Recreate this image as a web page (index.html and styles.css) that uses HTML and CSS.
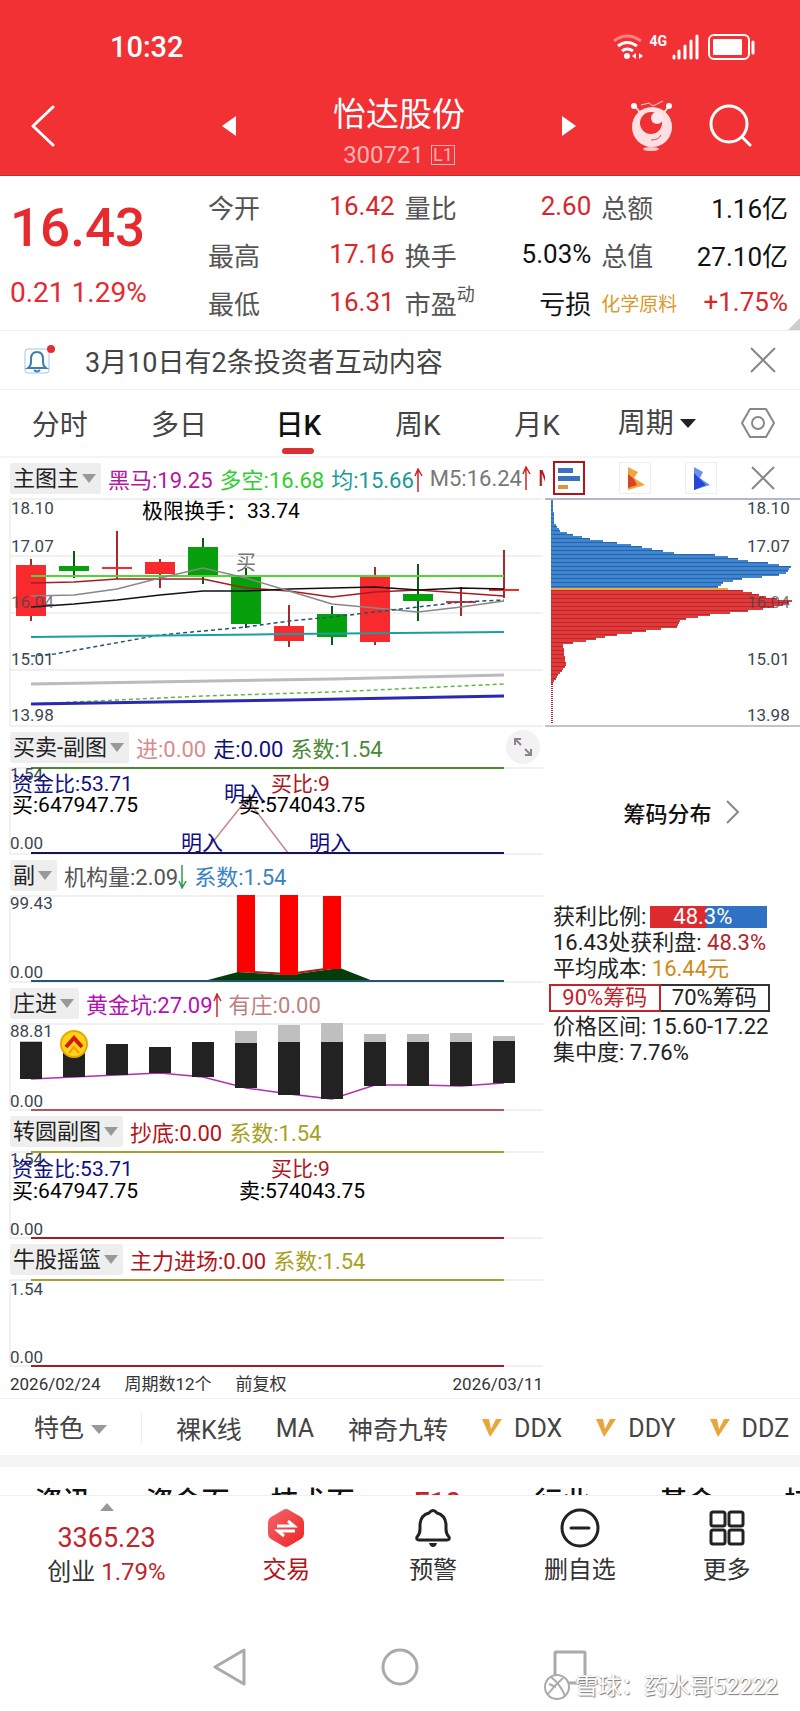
FILE: index.html
```html
<!DOCTYPE html>
<html lang="zh-CN">
<head>
    <meta charset="UTF-8">
    <meta name="viewport" content="width=device-width, initial-scale=1.0">
    <title>怡达股份 300721</title>
    <link rel="stylesheet" href="styles.css">
</head>
<body>
    <header class="header">
        <div class="status">
            <span class="clock">10:32</span>
            <div class="status-icons">
                <svg width="31" height="26" viewBox="0 0 31 26" fill="none" stroke="#fff" stroke-width="3">
                    <path d="M1 7Q14-3 28 7" stroke="#ff8080"/>
                    <path d="M5 12Q14 5 24 12M9 17Q14 13 20 17"/>
                    <circle cx="14" cy="22" r="3" fill="#fff" stroke="none"/>
                    <path d="M19 22l4-3v6zM26 19v6l4-3z" fill="#fff" stroke="none"/>
                </svg>
                <span class="net">4G</span>
                <svg width="27" height="26" viewBox="0 0 27 26" stroke="#fff" stroke-width="3" stroke-linecap="round">
                    <path d="M2 22v2M7 17v7M13 12v12M19 7v17M25 2v22"/>
                </svg>
                <svg class="battery" width="48" height="26" viewBox="0 0 48 26" fill="none" stroke="#fff" stroke-width="2">
                    <rect x="1" y="1" width="40" height="24" rx="5"/>
                    <rect x="5" y="5" width="29" height="16" rx="1" fill="#fff" stroke="none"/>
                    <path d="M45 8v11" stroke-width="3" stroke-linecap="round"/>
                </svg>
            </div>
        </div>
        <nav class="title-bar">
            <button class="back" aria-label="返回">
                <svg width="24" height="42" viewBox="0 0 24 42" fill="none" stroke="#fff" stroke-width="3" stroke-linecap="round" stroke-linejoin="round"><path d="M22 2L2 21l20 19"/></svg>
            </button>
            <button aria-label="上一只">
                <svg width="14" height="20" viewBox="0 0 14 20"><path d="M14 0v20L0 10z" fill="#fff"/></svg>
            </button>
            <div class="title">
                <h1>怡达股份</h1>
                <p>300721 <span>L1</span></p>
            </div>
            <button aria-label="下一只">
                <svg width="14" height="20" viewBox="0 0 14 20"><path d="M0 0v20l14-10z" fill="#fff"/></svg>
            </button>
            <button class="robot" aria-label="助手">
                <svg width="42" height="52" viewBox="0 0 42 52">
                    <g stroke="#ffd9da" stroke-width="2" fill="none"><path d="M4 6l6 8M38 6l-6 8"/><path d="M10 5l8-2 4 3 10-5" stroke-width="1"/></g>
                    <circle cx="3" cy="6" r="3" fill="#fff"/><circle cx="38" cy="6" r="3" fill="#fff"/>
                    <circle cx="21" cy="27" r="20" fill="#ffdfe1"/>
                    <circle cx="20" cy="23" r="11" fill="#f03033"/>
                    <circle cx="26" cy="18" r="6" fill="#ffe9ea"/>
                    <path d="M20 40q8 0 10-5" fill="none" stroke="#d7484a" stroke-width="1"/>
                    <ellipse cx="20" cy="49" rx="8" ry="2" fill="#ffc6c7"/>
                </svg>
            </button>
            <button class="search" aria-label="搜索">
                <svg width="43" height="43" viewBox="0 0 43 43" fill="none" stroke="#fff" stroke-width="3" stroke-linecap="round"><circle cx="20" cy="20" r="18"/><path d="M33 33l8 8"/></svg>
            </button>
        </nav>
    </header>

    <section class="quote">
        <div class="price">
            <strong>16.43</strong>
            <span>0.21 1.29%</span>
        </div>
        <dl class="facts">
            <div><dt>今开</dt><dd class="up">16.42</dd></div>
            <div><dt>量比</dt><dd class="up">2.60</dd></div>
            <div><dt>总额</dt><dd>1.16亿</dd></div>
            <div><dt>最高</dt><dd class="up">17.16</dd></div>
            <div><dt>换手</dt><dd>5.03%</dd></div>
            <div><dt>总值</dt><dd>27.10亿</dd></div>
            <div><dt>最低</dt><dd class="up">16.31</dd></div>
            <div><dt>市盈<sup>动</sup></dt><dd>亏损</dd></div>
            <div><dt class="sector">化学原料</dt><dd class="up">+1.75%</dd></div>
        </dl>
    </section>

    <section class="notice">
        <svg width="32" height="30" viewBox="0 0 32 30" fill="none">
            <rect x="1" y="4" width="24" height="24" rx="3" stroke="#9cc6e6"/>
            <path d="M4 23h18q-3-2-3-6v-3q0-7-6-7t-6 7v3q0 4-3 6zM10 25q3 3 6 0" stroke="#3c7fb4" stroke-width="2"/>
            <circle cx="27" cy="4" r="4" fill="#e02f35"/>
        </svg>
        <p>3月10日有2条投资者互动内容</p>
        <button aria-label="关闭">
            <svg width="26" height="26" viewBox="0 0 26 26" stroke="#888" stroke-width="2"><path d="M1 1l24 24M25 1L1 25"/></svg>
        </button>
    </section>

    <nav class="tabs">
        <button>分时</button>
        <button>多日</button>
        <button class="active">日K</button>
        <button>周K</button>
        <button>月K</button>
        <select class="period" aria-label="周期"><option>周期</option></select>
        <button class="gear" aria-label="设置">
            <svg width="34" height="32" viewBox="0 0 34 32" fill="none" stroke="#888" stroke-width="2"><path d="M9 2h16l8 14-8 14H9L1 16z" stroke-linejoin="round"/><circle cx="17" cy="16" r="6"/></svg>
        </button>
    </nav>

    <main class="charts">
        <div class="left">
            <div class="legend">
                <select class="pick" aria-label="主图指标"><option>主图主</option></select>
                <span class="magenta">黑马:19.25</span>
                <span class="lime">多空:16.68</span>
                <span class="teal">均:15.66<svg class="arrow" width="9" height="24" viewBox="0 0 9 24"><path d="M4 24V1M1 8l3-7 4 7"/></svg></span>
                <span class="gray">M5:16.24<svg class="arrow" width="9" height="24" viewBox="0 0 9 24"><path d="M4 24V1M1 8l3-7 4 7"/></svg></span>
                <span class="darkred">M</span>
            </div>
            <svg class="chart" viewBox="0 0 545 229">
                <path class="grid" d="M10 228V1H543M10 58H543M10 115H543M10 172H543M10 228H543"/>
                <g id="candles"></g>
                <g fill="none" stroke-width="1.5">
                    <path d="M31 78H504" stroke="#55d435" stroke-width="2"/>
                    <path d="M31 85L74 84 117 81 160 81 203 81 246 90 289 93 332 99 375 94 418 92 461 95 504 98" stroke="#a81c20"/>
                    <path d="M31 109L74 106 117 102 160 97 203 93 246 93 289 91 332 90 375 89 418 92 461 90 504 91" stroke="#111"/>
                    <path d="M31 98L74 97 117 91 160 80 203 70 246 80 289 93 332 106 375 110 418 114 461 109 504 103" stroke="#888"/>
                    <path d="M31 158L55 156 160 137 246 129 289 123 332 119 375 114 418 109 461 104 504 102" stroke="#24536e" stroke-dasharray="4 3"/>
                    <path d="M31 139L289 136 504 134" stroke="#18a0a0" stroke-width="2"/>
                    <path d="M31 186L332 181 504 177" stroke="#bbb" stroke-width="3"/>
                    <path d="M31 206L203 198 332 194 504 186" stroke="#5fb845" stroke-dasharray="4 3"/>
                    <path d="M31 206L289 202 504 198" stroke="#2a2ab0" stroke-width="3"/>
                </g>
                <g class="axis">
                    <text x="11" y="16">18.10</text>
                    <text x="11" y="54">17.07</text>
                    <text x="11" y="110" opacity="0.7">16.04</text>
                    <text x="11" y="167">15.01</text>
                    <text x="11" y="223">13.98</text>
                </g>
                <text class="mark" x="142" y="20">极限换手：33.74</text>
                <text class="mark faint" x="236" y="72">买</text>
            </svg>

            <div class="legend">
                <select class="pick" aria-label="副图一"><option>买卖-副图</option></select>
                <span class="rose">进:0.00</span>
                <span class="navy">走:0.00</span>
                <span class="green">系数:1.54</span>
                <button class="expand" aria-label="放大">
                    <svg width="20" height="20" viewBox="0 0 20 20" fill="none" stroke="#888" stroke-width="2"><path d="M2 8V2h6M2 2l6 6M18 12v6h-6M18 18l-6-6"/></svg>
                </button>
            </div>
            <svg class="chart" viewBox="0 0 545 88">
                <path class="grid" d="M10 87V1H543M10 87H543"/>
                <path d="M31 1H504" stroke="#4a8a34" stroke-width="2"/>
                <path d="M204 86L247 32 288 86" fill="none" stroke="#c08a8e" stroke-width="1.5"/>
                <path d="M31 86H504" stroke="#151550" stroke-width="2"/>
                <g class="axis"><text x="10" y="13">1.54</text><text x="10" y="82">0.00</text></g>
                <text class="mark navy" x="12" y="24">资金比:53.71</text>
                <text class="mark" x="12" y="45">买:647947.75</text>
                <text class="mark darkred" x="271" y="24">买比:9</text>
                <text class="mark navy" x="224" y="34">明入</text>
                <text class="mark" x="239" y="45">卖:574043.75</text>
                <text class="mark navy" x="181" y="83">明入</text>
                <text class="mark navy" x="309" y="83">明入</text>
            </svg>

            <div class="legend">
                <select class="pick" aria-label="副图二"><option>副</option></select>
                <span class="slate">机构量:2.09<svg class="arrow down" width="9" height="24" viewBox="0 0 9 24"><path d="M4 0v23M1 16l3 7 4-7"/></svg></span>
                <span class="blue">系数:1.54</span>
            </div>
            <svg class="chart" viewBox="0 0 545 88">
                <path class="grid" d="M10 87V1H543M10 87H543"/>
                <path d="M204 86L238 77 288 80 340 73 373 86z" fill="#043c0c"/>
                <path d="M238 76L288 79 340 72" fill="none" stroke="#a81c20" stroke-width="2"/>
                <path d="M237 0h18v77h-18zM280 0h18v80h-18zM323 1h18v73h-18z" fill="#f00"/>
                <path d="M31 86H504" stroke="#23586e" stroke-width="2"/>
                <g class="axis"><text x="10" y="14">99.43</text><text x="10" y="83">0.00</text></g>
            </svg>

            <div class="legend">
                <select class="pick" aria-label="副图三"><option>庄进</option></select>
                <span class="purple">黄金坑:27.09<svg class="arrow" width="9" height="24" viewBox="0 0 9 24"><path d="M4 24V1M1 8l3-7 4 7"/></svg></span>
                <span class="dusty">有庄:0.00</span>
            </div>
            <svg class="chart" viewBox="0 0 545 88">
                <path class="grid" d="M10 87V1H543M10 87H543"/>
                <path d="M31 56L74 54 117 52 160 50 203 54 246 65 289 71 332 76 375 62 418 62 461 63 504 60" fill="none" stroke="#b030b0" stroke-width="1.5"/>
                <g id="volumes"></g>
                <path d="M31 87H504" stroke="#b5575c" stroke-width="2"/>
                <circle cx="74" cy="21" r="13" fill="#ffd21c" stroke="#e8a800" stroke-width="2"/>
                <path d="M66 24l8-9 8 9" fill="none" stroke="#d01c10" stroke-width="4"/>
                <path d="M69 30l5-6 5 6" fill="none" stroke="#f59a00" stroke-width="2"/>
                <g class="axis"><text x="10" y="14">88.81</text><text x="10" y="84">0.00</text></g>
            </svg>

            <div class="legend">
                <select class="pick" aria-label="副图四"><option>转圆副图</option></select>
                <span class="darkred">抄底:0.00</span>
                <span class="olive">系数:1.54</span>
            </div>
            <svg class="chart" viewBox="0 0 545 88">
                <path class="grid" d="M10 87V1H543M10 87H543"/>
                <path d="M31 1H504" stroke="#a8a035" stroke-width="2"/>
                <path d="M31 87H504" stroke="#a81c20" stroke-width="2"/>
                <g class="axis"><text x="10" y="14">1.54</text><text x="10" y="84">0.00</text></g>
                <text class="mark navy" x="12" y="25">资金比:53.71</text>
                <text class="mark" x="12" y="47">买:647947.75</text>
                <text class="mark darkred" x="271" y="25">买比:9</text>
                <text class="mark" x="239" y="47">卖:574043.75</text>
            </svg>

            <div class="legend">
                <select class="pick" aria-label="副图五"><option>牛股摇篮</option></select>
                <span class="darkred">主力进场:0.00</span>
                <span class="olive">系数:1.54</span>
            </div>
            <svg class="chart" viewBox="0 0 545 88">
                <path class="grid" d="M10 87V1H543M10 87H543"/>
                <path d="M31 1H504" stroke="#a8a035" stroke-width="2"/>
                <path d="M31 87H504" stroke="#a81c20" stroke-width="2"/>
                <g class="axis"><text x="10" y="16">1.54</text><text x="10" y="84">0.00</text></g>
            </svg>

            <div class="dates">
                <span>2026/02/24</span>
                <span>周期数12个</span>
                <span>前复权</span>
                <span class="end">2026/03/11</span>
            </div>
        </div>

        <aside class="right">
            <div class="modes">
                <button class="on" aria-label="筹码分布">
                    <svg width="28" height="30" viewBox="0 0 28 30"><path d="M3 5h15v5H3zM3 13h22v5H3z" fill="#3a72bd"/><path d="M3 22h10v4H3z" fill="#e0953a"/></svg>
                </button>
                <button aria-label="火焰山">
                    <svg width="30" height="30" viewBox="0 0 30 30"><path d="M8 4l10 5-4 6 11 7-17 5z" fill="#f0a63c"/><path d="M8 11l6 5 3 6-9 3z" fill="#d8432a"/></svg>
                </button>
                <button aria-label="活跃度">
                    <svg width="30" height="30" viewBox="0 0 30 30"><path d="M8 4l9 5-3 6 10 7-16 5z" fill="#6a94ea"/><path d="M8 10l6 6 6 6-12 5z" fill="#2746d8"/></svg>
                </button>
                <button class="plain" aria-label="关闭筹码">
                    <svg width="24" height="24" viewBox="0 0 24 24" stroke="#888" stroke-width="2"><path d="M1 1l22 22M23 1L1 23"/></svg>
                </button>
            </div>
            <svg class="chart" viewBox="0 0 255 229">
                <path d="M0 1H255" stroke="#b3b8c8" stroke-width="2"/>
                <g id="chips"></g>
                <path d="M0 228H255" stroke="#c3c3cc" stroke-width="2"/>
                <g class="axis">
                    <text x="202" y="16">18.10</text>
                    <text x="202" y="54">17.07</text>
                    <text x="202" y="110" opacity="0.7">16.04</text>
                    <text x="202" y="167">15.01</text>
                    <text x="202" y="223">13.98</text>
                </g>
            </svg>
            <a class="chips-link" href="#">筹码分布
                <svg width="14" height="24" viewBox="0 0 14 24" fill="none" stroke="#888" stroke-width="2"><path d="M1 1l11 11L1 23"/></svg>
            </a>
            <div class="stats">
                <p class="ratio">获利比例:<span class="bar">48.3%</span></p>
                <p>16.43处获利盘: <b class="profit">48.3%</b></p>
                <p>平均成本: <b class="cost">16.44元</b></p>
                <div class="range">
                    <button class="on">90%筹码</button>
                    <button>70%筹码</button>
                </div>
                <p>价格区间: 15.60-17.22</p>
                <p>集中度: 7.76%</p>
            </div>
        </aside>
    </main>

    <nav class="features">
        <select class="feature-pick" aria-label="特色指标"><option>特色</option></select>
        <button>裸K线</button>
        <button>MA</button>
        <button>神奇九转</button>
        <button><svg width="20" height="20" viewBox="0 0 20 20"><path d="M0 1h7l2 10 5-10h6L8 19z" fill="#e9a63a"/></svg>DDX</button>
        <button><svg width="20" height="20" viewBox="0 0 20 20"><path d="M0 1h7l2 10 5-10h6L8 19z" fill="#e9a63a"/></svg>DDY</button>
        <button><svg width="20" height="20" viewBox="0 0 20 20"><path d="M0 1h7l2 10 5-10h6L8 19z" fill="#e9a63a"/></svg>DDZ</button>
    </nav>

    <nav class="sections">
        <a href="#">资讯</a>
        <a href="#">资金面</a>
        <a href="#">技术面</a>
        <a href="#" class="active">F10</a>
        <a href="#">行业</a>
        <a href="#">基金</a>
        <a href="#">持仓</a>
    </nav>

    <footer class="toolbar">
        <button class="index">
            <svg width="14" height="8" viewBox="0 0 14 8"><path d="M7 0l7 8H0z" fill="#999"/></svg>
            <strong>3365.23</strong>
            <span>创业 <em>1.79%</em></span>
        </button>
        <button class="trade">
            <svg width="40" height="40" viewBox="0 0 40 40">
                <defs><linearGradient id="hex" x1="0" y1="0" x2="1" y2="1"><stop offset="0" stop-color="#f2686a"/><stop offset="1" stop-color="#ee2326"/></linearGradient></defs>
                <path d="M17 2q3-2 6 0l12 7q3 2 3 5v12q0 3-3 5l-12 7q-3 2-6 0L5 31q-3-2-3-5V14q0-3 3-5z" fill="url(#hex)"/>
                <path d="M11 18h17l-6-5M29 23H12l6 5" fill="none" stroke="#fff" stroke-width="3"/>
            </svg>
            交易
        </button>
        <button>
            <svg width="40" height="40" viewBox="0 0 40 40" fill="none" stroke="#222" stroke-width="3"><path d="M6 32q-3 0-2-3 3-3 3-8v-5Q8 7 16 5q4-5 8 0 8 2 9 11v5q0 5 3 8 1 3-2 3z" stroke-linejoin="round"/><path d="M16 35h8q-1 4-4 4t-4-4z" fill="#222" stroke="none"/></svg>
            预警
        </button>
        <button>
            <svg width="40" height="40" viewBox="0 0 40 40" fill="none" stroke="#222" stroke-width="3"><circle cx="20" cy="20" r="18"/><path d="M11 20h18" stroke-linecap="round"/></svg>
            删自选
        </button>
        <button>
            <svg width="40" height="40" viewBox="0 0 40 40" fill="none" stroke="#222" stroke-width="3"><rect x="4" y="4" width="14" height="14" rx="2"/><rect x="22" y="4" width="14" height="14" rx="2"/><rect x="4" y="22" width="14" height="14" rx="2"/><rect x="22" y="22" width="14" height="14" rx="2"/></svg>
            更多
        </button>
    </footer>

    <nav class="system">
        <button aria-label="后退"><svg width="38" height="38" viewBox="0 0 38 38" fill="none" stroke="#aaa" stroke-width="3" stroke-linejoin="round"><path d="M33 2v34L4 19z"/></svg></button>
        <button aria-label="主页"><svg width="38" height="38" viewBox="0 0 38 38" fill="none" stroke="#aaa" stroke-width="3"><circle cx="19" cy="19" r="17"/></svg></button>
        <button aria-label="任务"><svg width="38" height="38" viewBox="0 0 38 38" fill="none" stroke="#aaa" stroke-width="3"><rect x="4" y="4" width="30" height="31" rx="1"/></svg></button>
        <div class="watermark">
            <svg width="28" height="28" viewBox="0 0 28 28" fill="none" stroke="#aaa" stroke-width="2"><circle cx="14" cy="14" r="12" fill="#fff"/><path d="M8 4q10 8 14 19M20 5Q12 12 5 21M6 11l7 3"/></svg>
            雪球：药水哥52222
        </div>
    </nav>

    <script src="charts.js"></script>
</body>
</html>
```
FILE: styles.css
```css
* {
    box-sizing: border-box;
    margin: 0;
    padding: 0;
}

body {
    font-family: Roboto, "Noto Sans CJK SC", sans-serif;
    font-size: 22px;
    color: #222;
    background-color: #fff;
    overflow-x: hidden;
}

button, select {
    font: inherit;
    color: inherit;
    background: none;
    border: none;
    cursor: pointer;
}

select {
    appearance: none;
    background-repeat: no-repeat;
}

svg {
    display: block;
    flex-shrink: 0;
}

a {
    color: inherit;
    text-decoration: none;
}

/* header */
.header {
    background-color: #f13134;
    color: #fff;
    border-bottom: 1px solid #c22a2c;
}

.status {
    display: flex;
    justify-content: space-between;
    align-items: center;
    height: 76px;
    padding: 18px 44px 0 110px;
}

.clock {
    font-size: 29px;
    font-weight: 500;
}

.status-icons {
    display: flex;
    gap: 5px;
}

.net {
    font-size: 14px;
    line-height: 14px;
    font-weight: 700;
}

.battery {
    margin-left: 4px;
}

.title-bar {
    display: grid;
    grid-template-columns: 214px 30px 1fr 30px 89px 79px 48px;
    align-items: center;
    height: 99px;
}

.title-bar button {
    display: flex;
    justify-content: center;
}

.title-bar .back {
    justify-content: flex-start;
    padding-left: 31px;
}

.title-bar .robot {
    justify-content: flex-end;
}

.title-bar .search {
    justify-content: flex-end;
}

.title {
    padding-top: 17px;
    text-align: center;
}

.title h1 {
    font-size: 33px;
    line-height: 42px;
    font-weight: 400;
}

.title p {
    display: flex;
    justify-content: center;
    align-items: center;
    gap: 7px;
    font-size: 24px;
    line-height: 38px;
    color: #ffb4b4;
}

.title p span {
    padding: 0 1px;
    border: 1px solid #ffb4b4;
    font-size: 18px;
    line-height: 18px;
}

/* quote */
.quote {
    position: relative;
    display: flex;
    height: 155px;
    border-bottom: 1px solid #eee;
}

.quote::after {
    content: "";
    position: absolute;
    right: 0;
    bottom: 0;
    border-left: 12px solid transparent;
    border-bottom: 12px solid #ccc;
}

.price {
    width: 26%;
    padding: 20px 0 0 10px;
    color: #e62a2e;
}

.price strong {
    display: block;
    font-size: 53px;
    line-height: 64px;
    font-weight: 500;
}

.price span {
    display: block;
    margin-top: 17px;
    font-size: 28px;
    line-height: 32px;
}

.facts {
    flex: 1;
    display: grid;
    grid-template-columns: repeat(3, 1fr);
    grid-auto-rows: 48px;
    column-gap: 10px;
    padding: 6px 12px 0 0;
}

.facts div {
    display: flex;
    justify-content: space-between;
    align-items: center;
    font-size: 26px;
    white-space: nowrap;
}

.facts dt {
    color: #555;
}

.facts dd {
    color: #111;
}

.facts .up {
    color: #d9262b;
}

.facts .sector {
    font-size: 19px;
    color: #d99a2b;
}

.facts sup {
    font-size: 18px;
    line-height: 18px;
    vertical-align: 13px;
}

/* notice */
.notice {
    display: flex;
    align-items: center;
    height: 59px;
    padding: 0 24px;
    border-bottom: 1px solid #eee;
    font-size: 27px;
    color: #444;
}

.notice p {
    flex: 1;
    margin-left: 29px;
}

/* period tabs */
.tabs {
    display: grid;
    grid-template-columns: repeat(6, 1fr) 84px;
    height: 68px;
    border-bottom: 2px solid #f5f5f5;
    font-size: 28px;
    color: #444;
}

.tabs button {
    position: relative;
}

.tabs .active {
    color: #111;
    font-weight: 500;
}

.tabs .active::after {
    content: "";
    position: absolute;
    left: 50%;
    bottom: 2px;
    width: 32px;
    height: 6px;
    margin-left: -16px;
    border-radius: 3px;
    background-color: #dc2f34;
}

.period {
    padding-left: 21px;
    background-image: url("data:image/svg+xml,%3Csvg xmlns='http://www.w3.org/2000/svg' width='16' height='9'%3E%3Cpath d='M0 0h16L8 9z' fill='%23222'/%3E%3C/svg%3E");
    background-position: 83px 29px;
}

.gear {
    display: flex;
    justify-content: center;
    align-items: center;
}

/* charts */
.charts {
    display: grid;
    grid-template-columns: 109fr 51fr;
}

.left, .right {
    min-width: 0;
}

.chart {
    width: 100%;
    height: auto;
}

.legend {
    display: flex;
    align-items: center;
    gap: 7px;
    height: 40px;
    padding-left: 10px;
    overflow: hidden;
    white-space: nowrap;
}

.pick {
    flex-shrink: 0;
    height: 31px;
    padding: 0 21px 0 3px;
    border-radius: 3px;
    background-color: #eee;
    background-image: url("data:image/svg+xml,%3Csvg xmlns='http://www.w3.org/2000/svg' width='14' height='9'%3E%3Cpath d='M0 0h14L7 9z' fill='%23999'/%3E%3C/svg%3E");
    background-position: right 5px center;
}

.arrow {
    display: inline-block;
    vertical-align: -4px;
    fill: none;
    stroke: #c8282d;
    stroke-width: 1.5;
}

.arrow.down {
    stroke: #2f9a4a;
}

.expand {
    display: flex;
    justify-content: center;
    align-items: center;
    width: 34px;
    height: 34px;
    margin: 0 5px 0 auto;
    border-radius: 50%;
    background-color: #f3f1f3;
}

.magenta { color: #b5179e; }
.lime { color: #2fce2f; }
.teal { color: #1a9a96; }
.gray { color: #777; }
.darkred { color: #b3141a; fill: #b3141a; }
.rose { color: #d98c8c; }
.navy { color: #101080; fill: #101080; }
.green { color: #4a8a34; }
.slate { color: #555; }
.blue { color: #3a82c4; }
.purple { color: #b312b3; }
.dusty { color: #c07f7f; }
.olive { color: #a8a020; }

.grid {
    fill: none;
    stroke: #e2e2e4;
    stroke-width: 1;
}

.axis {
    font-size: 17px;
    fill: #3c4650;
}

.mark {
    font-size: 21px;
}

.faint {
    font-size: 20px;
    fill: #777;
}

.dates {
    display: flex;
    gap: 24px;
    padding: 3px 2px 0 10px;
    font-size: 17px;
    line-height: 28px;
    color: #333;
}

.dates .end {
    margin-left: auto;
}

.modes {
    display: grid;
    grid-template-columns: repeat(3, 1fr) 49px;
    align-items: center;
    height: 40px;
    padding-left: 8px;
}

.modes button {
    width: 32px;
    border: 1px solid #eee;
}

.modes .on {
    border: 2px solid #b3141a;
}

.modes .plain {
    border: none;
}

.chips-link {
    display: flex;
    justify-content: center;
    align-items: center;
    gap: 14px;
    height: 170px;
    padding-left: 18px;
    font-weight: 500;
    color: #111;
}

.stats {
    padding: 7px 33px 0 8px;
    line-height: 26px;
    white-space: nowrap;
}

.stats b {
    font-weight: 400;
}

.ratio {
    display: flex;
    align-items: center;
    gap: 4px;
}

.bar {
    flex: 1;
    padding-left: 23px;
    line-height: 22px;
    color: #fff;
    background: linear-gradient(to right, #dc2a2e 48%, #2f72c4 48%);
}

.profit {
    color: #b3242c;
}

.cost {
    color: #cf8a1a;
}

.range {
    display: flex;
    margin: 2px -3px 2px -4px;
}

.range button {
    flex: 1;
    height: 28px;
    border: 2px solid #333;
    border-left: none;
    line-height: 24px;
}

.range .on {
    color: #c2242c;
    border: 2px solid #c2242c;
}

/* bottom */
.features {
    display: flex;
    align-items: center;
    gap: 34px;
    height: 57px;
    padding: 2px 0 0 34px;
    border-top: 1px solid #eee;
    font-size: 25px;
    color: #444;
    overflow: hidden;
    white-space: nowrap;
}

.features button {
    display: flex;
    align-items: center;
    gap: 12px;
    flex-shrink: 0;
}

.feature-pick {
    flex-shrink: 0;
    width: 108px;
    height: 30px;
    border-right: 1px solid #eee;
    background-image: url("data:image/svg+xml,%3Csvg xmlns='http://www.w3.org/2000/svg' width='16' height='9'%3E%3Cpath d='M0 0h16L8 9z' fill='%23999'/%3E%3C/svg%3E");
    background-position: 57px 12px;
}

.sections {
    display: grid;
    grid-template-columns: repeat(7, 125px);
    height: 40px;
    padding-top: 20px;
    border-top: 12px solid #f5f5f5;
    overflow: hidden;
    font-size: 28px;
    line-height: 32px;
    font-weight: 500;
    text-align: center;
    white-space: nowrap;
    color: #111;
}

.sections .active {
    color: #c2242c;
}

.toolbar {
    display: grid;
    grid-template-columns: 213px repeat(4, 1fr);
    height: 106px;
    border-top: 1px solid #f0f0f0;
    font-size: 24px;
    line-height: 34px;
    color: #333;
}

.toolbar button {
    display: flex;
    flex-direction: column;
    align-items: center;
    gap: 5px;
    padding-top: 12px;
}

.toolbar .index {
    gap: 0;
    padding: 7px 20px 0 20px;
}

.index strong {
    margin-top: 10px;
    font-size: 27px;
    font-weight: 400;
    color: #c2242c;
}

.index em {
    font-style: normal;
    color: #c2242c;
}

.toolbar .trade {
    color: #b3141a;
}

.system {
    position: relative;
    display: flex;
    justify-content: center;
    gap: 132px;
    height: 110px;
    padding-top: 47px;
}

.system button {
    height: 38px;
}

.watermark {
    position: absolute;
    right: 22px;
    bottom: 10px;
    display: flex;
    align-items: center;
    gap: 4px;
    font-size: 23px;
    line-height: 28px;
    color: #fff;
    text-shadow: 1px 1px 1px #777, -1px 0 1px #ccc;
}
```
FILE: charts.js
```javascript
const RED = '#f92a2e';
const GREEN = '#06a00c';

function rect(x, y, width, height, fill) {
    return `<rect x="${x}" y="${y}" width="${width}" height="${height}" fill="${fill}"/>`;
}

// [body top, body bottom, wick top, wick bottom, color]
const candles = [
    [67, 118, 61, 123, RED],
    [68, 73, 53, 80, GREEN],
    [69, 71, 33, 81, RED],
    [64, 76, 61, 90, RED],
    [49, 78, 40, 86, GREEN],
    [77, 126, 70, 130, GREEN],
    [128, 143, 107, 149, RED],
    [116, 139, 108, 147, GREEN],
    [79, 144, 69, 147, RED],
    [96, 103, 66, 123, GREEN],
    [103, 105, 89, 118, RED],
    [91, 93, 52, 100, RED]
];

document.getElementById('candles').innerHTML = candles.map(function(c, i) {
    const x = 31 + i * 43;
    const wick = c[4] === RED ? '#a8282c' : '#0a5a14';
    return rect(x - 1, c[2], 2, c[3] - c[2], wick) + rect(x - 15, c[0], 30, c[1] - c[0], c[4]);
}).join('');

// [gray top, black top, bottom]
const volumes = [
    [18, 19, 56], [21, 21, 54], [21, 21, 52], [24, 24, 50], [19, 19, 54], [8, 20, 65],
    [2, 19, 72], [0, 19, 76], [11, 19, 63], [11, 19, 63], [10, 19, 63], [13, 18, 60]
];

document.getElementById('volumes').innerHTML = volumes.map(function(v, i) {
    const x = 20 + i * 43;
    return rect(x, v[0], 22, v[1] - v[0], '#bfbfbf') + rect(x, v[1], 22, v[2] - v[1], '#222');
}).join('');

// chip profile: [y, bar end]
const profile = [
    [1, 8], [24, 9], [32, 15], [36, 28], [40, 45], [43, 65], [46, 86], [50, 107], [54, 129],
    [56, 170], [58, 183], [62, 203], [64, 223], [66, 234], [68, 246], [75, 240], [77, 227],
    [80, 197], [84, 178], [89, 172], [91, 193], [93, 203], [96, 214], [99, 225], [102, 247],
    [105, 242], [109, 225], [111, 210], [113, 195], [116, 165], [119, 147], [121, 135],
    [128, 132], [131, 108], [134, 87], [137, 64], [141, 47], [144, 28], [146, 18], [167, 21],
    [175, 14], [184, 8], [227, 8]
];

function profileAt(y) {
    const i = Math.max(1, profile.findIndex(p => p[0] >= y));
    const a = profile[i - 1];
    const b = profile[i];
    return Math.round(a[1] + (b[1] - a[1]) * (y - a[0]) / (b[0] - a[0]));
}

let bars = '';
for (let y = 2; y < 226; y += 2) {
    const width = profileAt(y) - 6;
    if (y === 90) {
        bars += rect(6, y, width, 2, '#f0a63c');
        continue;
    }
    const thin = y > 184;
    const light = y < 90 ? '#3f86d2' : '#e23a3a';
    const dark = y < 90 ? '#2b62a4' : '#b8282c';
    if (!thin) {
        bars += rect(6, y, width, 2, light);
    }
    if (y % 4 === 0 || thin) {
        bars += rect(6, y, width, 1, dark);
    }
}
document.getElementById('chips').innerHTML = bars;
```
